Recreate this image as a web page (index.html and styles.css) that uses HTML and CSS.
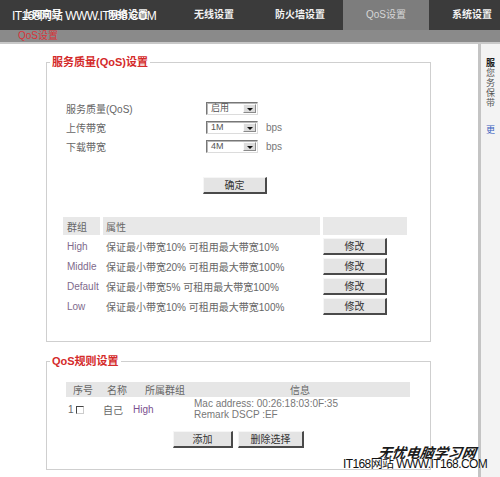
FILE: index.html
```html
<!DOCTYPE html>
<html lang="zh-CN">
<head>
<meta charset="utf-8">
<title>QoS设置</title>
<link rel="stylesheet" href="styles.css">
</head>
<body>
<div class="page">
  <nav class="topnav">
    <a class="tab">上网向导</a>
    <a class="tab">网络设置</a>
    <a class="tab">无线设置</a>
    <a class="tab">防火墙设置</a>
    <a class="tab active">QoS设置</a>
    <a class="tab">系统设置</a>
  </nav>
  <div class="subnav"><span class="subnav-item">QoS设置</span></div>
  <div class="main">
    <div class="content">
      <fieldset class="panel panel-qos">
        <legend>服务质量(QoS)设置</legend>
        <div class="form">
          <div class="row"><span class="label">服务质量(QoS)</span><span class="select">启用<i class="arrow"></i></span></div>
          <div class="row"><span class="label">上传带宽</span><span class="select">1M<i class="arrow"></i></span><span class="unit">bps</span></div>
          <div class="row"><span class="label">下载带宽</span><span class="select">4M<i class="arrow"></i></span><span class="unit">bps</span></div>
        </div>
        <div class="confirm-row"><button class="btn btn-confirm">确定</button></div>
        <table class="groups">
          <tr><th class="c-group">群组</th><th class="c-attr">属性</th><th class="c-act"></th></tr>
          <tr><td class="c-group">High</td><td class="c-attr">保证最小带宽10% 可租用最大带宽10%</td><td class="c-act"><button class="btn btn-edit">修改</button></td></tr>
          <tr><td class="c-group">Middle</td><td class="c-attr">保证最小带宽20% 可租用最大带宽100%</td><td class="c-act"><button class="btn btn-edit">修改</button></td></tr>
          <tr><td class="c-group">Default</td><td class="c-attr">保证最小带宽5% 可租用最大带宽100%</td><td class="c-act"><button class="btn btn-edit">修改</button></td></tr>
          <tr><td class="c-group">Low</td><td class="c-attr">保证最小带宽10% 可租用最大带宽100%</td><td class="c-act"><button class="btn btn-edit">修改</button></td></tr>
        </table>
      </fieldset>
      <fieldset class="panel panel-rules">
        <legend>QoS规则设置</legend>
        <table class="rules">
          <tr><th class="r-no">序号</th><th class="r-name">名称</th><th class="r-group">所属群组</th><th class="r-info">信息</th></tr>
          <tr>
            <td class="r-no">1<span class="check"></span></td>
            <td class="r-name">自己</td>
            <td class="r-group">High</td>
            <td class="r-info">Mac address: 00:26:18:03:0F:35<br>Remark DSCP :EF</td>
          </tr>
        </table>
        <div class="actions"><button class="btn btn-add">添加</button><button class="btn btn-del">删除选择</button></div>
      </fieldset>
    </div>
    <aside class="sidebar">
      <div class="sb-col">
        <div class="sb-title">服</div>
        <div class="sb-text">您务保带</div>
        <div class="sb-more">更</div>
      </div>
    </aside>
  </div>
  <div class="wm wm-top">IT168网站 WWW.IT168.COM</div>
  <div class="wm-logo">无忧电脑学习网</div>
  <div class="wm wm-bottom">IT168网站 WWW.IT168.COM</div>
</div>
</body>
</html>
```
FILE: styles.css
```css
* { box-sizing: border-box; }
html, body { margin: 0; padding: 0; background: #fff; }
body {
  font-family: "Liberation Sans", "Noto Sans CJK SC", sans-serif;
  font-size: 10px;
  color: #666;
}
.page { position: relative; width: 500px; height: 477px; overflow: hidden; }

.topnav { display: flex; height: 30px; background: #3b3b3b; margin-left: -1px; }
.tab {
  flex: 0 0 86px;
  display: flex; align-items: center; justify-content: center;
  color: #f2f2f2; font-weight: bold; font-size: 10px; padding-bottom: 3px;
}
.tab.active { background: #7d7d7d; color: #d6d6d6; font-weight: normal; }

.subnav { height: 14px; background: #8a8a8a; border-bottom: 2px solid #c8c8c8; padding-left: 18px; }
.subnav-item { display: block; color: #d8343a; font-size: 10px; line-height: 12px; }

.main { display: flex; height: 433px; }
.content { width: 478px; padding: 11px 0 0 46px; }

.panel { width: 385px; margin: 0; padding: 0; border: 1px solid #cfcfcf; }
.panel legend {
  margin-left: 3px; padding: 0 2px;
  color: #d42a2a; font-weight: bold; font-size: 11px; line-height: 14px;
}
.panel-qos { padding-bottom: 23px; }
.panel-rules { margin-top: 12px; }

.form { padding: 30px 0 0 19px; }
.row { display: flex; align-items: center; height: 19px; }
.label { width: 140px; color: #666; }
.select {
  position: relative; display: flex; align-items: center;
  width: 52px; height: 13px; padding-left: 4px;
  border: 1px solid; border-color: #777 #dcdcdc #dcdcdc #777;
  box-shadow: inset 1px 1px 0 #b8b8b8;
  background: #fff; color: #555; font-size: 9px; line-height: 11px;
}
.arrow {
  position: absolute; right: 1px; top: 1px; bottom: 1px; width: 13px;
  background: #dcdcdc; border: 1px solid; border-color: #fafafa #8a8a8a #8a8a8a #fafafa;
}
.arrow::after {
  content: ""; position: absolute; left: 3px; top: 3px;
  border-left: 3px solid transparent; border-right: 3px solid transparent; border-top: 3px solid #111;
}
.unit { margin-left: 8px; color: #777; }

.confirm-row { padding: 21px 0 0 156px; }
.btn {
  height: 17px; padding: 0;
  background: #e4e4e4; color: #333;
  border: 1px solid; border-color: #f6f6f6 #4a4a4a #4a4a4a #f6f6f6;
  border-right-width: 2px; border-bottom-width: 2px;
  font-family: "Noto Sans CJK SC", sans-serif; font-size: 10px; line-height: 14px;
}
.btn-confirm { width: 64px; }
.btn-edit { width: 64px; display: block; }
.btn-add { width: 60px; }
.btn-del { width: 66px; }

.groups { margin: 20px 0 0 13px; border-collapse: separate; border-spacing: 3px; }
.groups th { background: #e8e8e8; height: 18px; text-align: left; font-weight: normal; color: #666; padding: 0; }
.groups td { height: 17px; padding: 0; }
.groups .c-group { width: 37px; padding-left: 4px; }
.groups td.c-group { color: #806a8c; }
.groups .c-attr { width: 217px; padding-left: 3px; color: #666; }
.groups .c-act { width: 84px; }

.rules { margin: 14px 0 0 19px; width: 344px; border-collapse: collapse; }
.rules th { background: #e6e6e6; height: 14px; padding: 0; text-align: left; font-weight: normal; color: #666; }
.rules td { height: 24px; padding: 0; color: #666; vertical-align: middle; }
.rules .r-no { width: 34px; }
.rules .r-name { width: 30px; }
.rules .r-group { width: 60px; }
.rules th.r-no { padding-left: 7px; }
.rules th.r-name { padding-left: 7px; }
.rules th.r-group { padding-left: 15px; }
.rules th.r-info { text-align: center; }
.rules td.r-no { padding-left: 2px; }
.rules td.r-name { padding-left: 3px; }
.rules td.r-group { padding-left: 3px; color: #7b4f8f; }
.rules td.r-info { padding-left: 4px; line-height: 11px; color: #777; }
.check {
  display: inline-block; width: 8px; height: 8px; margin-left: 2px; vertical-align: -1px;
  border: 1px solid; border-color: #444 #ccc #ccc #444; background: #fff;
}
.actions { display: flex; gap: 5px; padding: 10px 0 21px 126px; }

.sidebar {
  width: 22px; border-left: 3px solid #c4c4c4; background: #f3f3f3;
  padding: 14px 0 0 5px; font-size: 9px; line-height: 10px;
}
.sb-col { width: 10px; }
.sb-title { font-weight: bold; color: #1a1a1a; }
.sb-text { color: #555; }
.sb-more { margin-top: 17px; color: #3a5fbf; }

.wm {
  position: absolute;
  font-family: "Liberation Sans", "Noto Sans CJK SC", sans-serif;
  font-size: 12px; line-height: 14px; letter-spacing: -0.6px; white-space: nowrap;
}
.wm-top { left: 12px; top: 9px; color: #fff; }
.wm-bottom { left: 343px; top: 457px; color: #111; text-shadow: 0 0 1px #fff, 0 0 1px #fff; }
.wm-logo {
  position: absolute; left: 378px; top: 444px;
  font-family: "Noto Sans CJK SC", sans-serif; font-weight: bold; font-style: italic;
  font-size: 14px; line-height: 16px; color: #1a1a1a; white-space: nowrap;
  transform: skewX(-8deg);
}
```
